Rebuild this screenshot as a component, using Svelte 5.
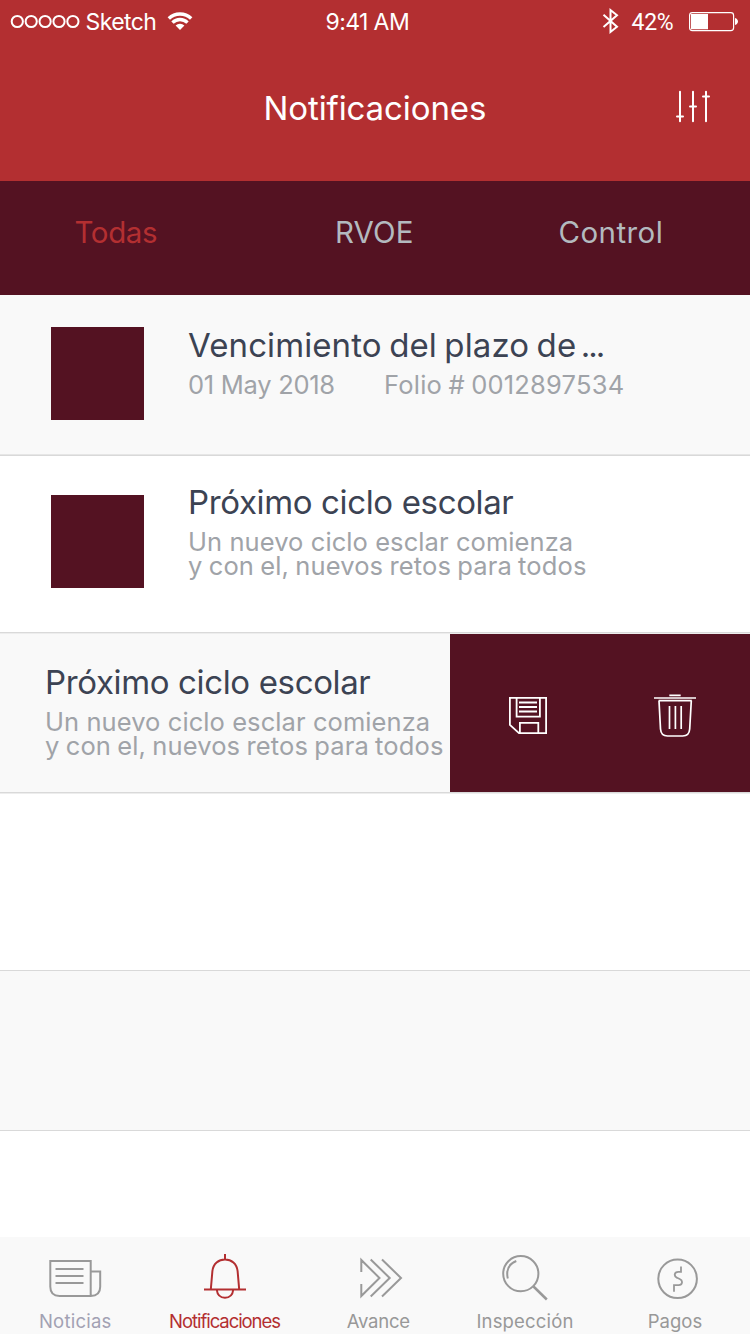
<script>
  const tabs = [
    { label: 'Todas', key: 'all', active: true },
    { label: 'RVOE', key: 'rvoe' },
    { label: 'Control', key: 'control' }
  ];
  const nav = [
    { label: 'Noticias', key: 'news' },
    { label: 'Notificaciones', key: 'alerts' },
    { label: 'Avance', key: 'progress' },
    { label: 'Inspección', key: 'inspect' },
    { label: 'Pagos', key: 'pay' }
  ];
</script>

{#snippet message()}
  <div class="copy">
    <h2 class="tight">Próximo ciclo escolar</h2>
    <p class="line-a">Un nuevo ciclo esclar comienza</p>
    <p class="line-b">y con el, nuevos retos para todos</p>
  </div>
{/snippet}

<div class="screen">
  <header>
    <div class="status">
      <div class="carrier">
        <svg width="70" height="44" viewBox="10 0 70 44" fill="none" stroke="#fff" stroke-width="2">
          {#each [17.3, 31.2, 45.1, 59, 72.9] as x}<circle cx={x} cy="21.5" r="5.6" />{/each}
        </svg>
        <span>Sketch</span>
        <svg width="26" height="44" viewBox="167 0 26 44" fill="none" stroke="#fff" stroke-width="3.4">
          <path d="M168.8 18.5a16 16 0 0 1 22.4 0M172.5 22.6a10.6 10.6 0 0 1 15 0" />
          <path d="M180 30l-4.4-4.4a6.2 6.2 0 0 1 8.8 0z" fill="#fff" stroke="none" />
        </svg>
      </div>
      <span class="time">9:41 AM</span>
      <div class="power">
        <svg width="18" height="44" viewBox="602 0 18 44" fill="none" stroke="#fff" stroke-width="2">
          <path d="M603.5 14.8L617 26.8l-6.5 5.2v-22l6.5 5.2-13.5 11.8" />
        </svg>
        <span>42%</span>
        <svg width="51" height="44" viewBox="688 0 51 44">
          <rect x="689.6" y="12.6" width="44" height="18" rx="2.8" fill="none" stroke="#fff" stroke-width="1.2" />
          <path d="M691 14h17v15.2h-17zM735 18c2 .6 3 2 3 3.5s-1 2.9-3 3.5z" fill="#fff" />
        </svg>
      </div>
    </div>
    <div class="titlebar">
      <h1>Notificaciones</h1>
      <svg width="36" height="40" viewBox="675 88 36 40" fill="none" stroke="#fff" stroke-width="2" stroke-linecap="round">
        <path d="M680 91.8v29.4M693 91.8v29.4M706 91.8v29.4M677 116.5h6M690 106.5h6M703 96.5h6" />
      </svg>
    </div>
  </header>

  <div class="tabs">
    {#each tabs as tab}
      <span class="tab {tab.key}" class:active={tab.active}>{tab.label}</span>
    {/each}
  </div>

  <main>
    <section class="row short shade">
      <div class="thumb"></div>
      <div class="copy">
        <h2>Vencimiento del plazo de <span class="dots">...</span></h2>
        <div class="meta"><span class="date">01 May 2018</span><span class="folio">Folio # 0012897534</span></div>
      </div>
    </section>
    <section class="row tall">
      <div class="thumb"></div>
      {@render message()}
    </section>
    <section class="row short shade swiped">
      {@render message()}
      <div class="actions">
        <svg width="150" height="158" viewBox="450 634 150 158" fill="none" stroke="#fff" stroke-width="1.8">
          <path d="M509.9 697.9H546.1V733.1H519L509.9 724.8zM516.6 698v18.6h23.3V698M519 702.5h18M519 707h18M519 711.5h18M519.9 733v-10.2h18.4V733" />
        </svg>
        <svg width="150" height="158" viewBox="600 634 150 158" fill="none" stroke="#fff" stroke-width="1.7">
          <path d="M654 698h42M669.3 695.4h11.4M658.6 700.6h33.2M659 700.6l1.5 28.4q.5 7 7 7h15.2q6.5 0 7-7l1.6-28.4M669.5 706v23M675.4 706v23M681.2 706v23" />
        </svg>
      </div>
    </section>
    <section class="row tall blank"></section>
    <section class="row short shade last"></section>
  </main>

  <nav>
    {#each nav as item, i}
      <div class="item {item.key}">
        <svg width="150" height="60" viewBox="{i * 150} 1247 150 60" fill="none" stroke="currentColor" stroke-width="2">
          {#if item.key === 'news'}
            <path d="M50.3 1261H90.7V1296H59.5q-9.2 0-9.2-9.2zM90.7 1271.5h9.5v15.3q0 9.2-9.5 9.2M55.5 1269h28M55.5 1276h28M55.5 1283h28" />
          {:else if item.key === 'alerts'}
            <path d="M204 1289.6h42M225 1254v5.5M210.8 1289.5l1.6-18.5c.8-7.5 6.2-11.6 12.6-11.6s11.8 4.1 12.6 11.6l1.6 18.5M216.8 1290c.6 5 3.7 7.7 8.2 7.7s7.6-2.7 8.2-7.7" />
          {:else if item.key === 'progress'}
            <path d="M361.3 1272v-12l18.2 18-18.2 18v-12M370.7 1259.5l19 18.5-19 18.5M382 1259.5l19 18.5-19 18.5" />
          {:else if item.key === 'inspect'}
            <circle cx="520.8" cy="1273.7" r="17.6" /><path d="M507.8 1278.5c-1.8-8 1-14.5 8.5-17.5" />
            <path d="M533.5 1286.5l13.3 13" stroke-width="2.5" />
          {:else}
            <circle cx="677.6" cy="1278.8" r="19.3" />
            <path d="M681 1266.5v5.3h-2.7c-4.2 0-4.7 4.5-1.2 6l2.6 1.2c3.6 1.6 2.8 6.2-1 6.2h-4.7v6.5" stroke-width="1.8" />
          {/if}
        </svg>
        <span>{item.label}</span>
      </div>
    {/each}
  </nav>
</div>

<style>
  :global(body) { margin: 0; background: #fff; }
  .screen { width: 750px; height: 1334px; display: flex; flex-direction: column; overflow: hidden; font-family: Inter, "Liberation Sans", sans-serif; background: #fff; }
  svg { display: block; flex: none; }
  h1, h2, p { margin: 0; font-weight: 400; }
  span, h1, h2, p { white-space: nowrap; }

  header { height: 181px; flex: none; background: #b32f31; color: #fff; }
  .status { height: 44px; display: grid; grid-template-columns: 315.5px 84px 1fr; font-size: 23px; line-height: 44px; padding: 0 11px 0 10px; }
  .carrier, .power { display: flex; }
  .carrier span { margin-left: 5.5px; width: 81.5px; letter-spacing: -.6px; }
  .time { letter-spacing: -.6px; }
  .power { justify-content: flex-end; }
  .power span { width: 56.5px; margin-left: 11.5px; font-family: Roboto, sans-serif; letter-spacing: -.3px; line-height: 46px; height: 44px; }
  .titlebar { display: grid; grid-template-columns: 263.5px 1fr 36px; padding: 44px 39px 0 0; }
  h1 { grid-column: 2; font-size: 33px; line-height: 40px; letter-spacing: -.1px; }

  .tabs { height: 83px; flex: none; padding-top: 31px; background: #541222; display: grid; grid-template-columns: 260.5px 223.5px 1fr; padding-left: 74.5px; color: #b3babf; font-size: 29.5px; line-height: 40px; }
  .all { letter-spacing: -.4px; }
  .rvoe { letter-spacing: .1px; }
  .control { letter-spacing: .42px; }
  .active { color: #b32f31; }

  main { flex: none; }
  .row { display: flex; box-sizing: border-box; border-bottom: 1px solid #ededed; box-shadow: inset 0 -1px #d9d9d9; padding-bottom: 1px; background: #fff; }
  .short { height: 160px; }
  .tall { height: 178px; }
  .shade { background: #f9f9f9; }
  .row:first-child { height: 161px; border-color: #d9d9d9; box-shadow: inset 0 -1px #e6e6e6; }
  .thumb { width: 93px; height: 93px; margin: 32px 44px 0 51px; background: #541222; flex: none; }
  .tall .thumb { margin-top: 39px; }
  .copy { padding-top: 30px; color: #a0a3a8; font-size: 25.5px; line-height: 24px; }
  .tall .copy { padding-top: 26px; }
  h2 { color: #3c4353; font-size: 33px; line-height: 40px; letter-spacing: .1px; word-spacing: -1.9px; margin-bottom: 7.5px; }
  h2 .dots { letter-spacing: -2px; margin-left: -3px; }
  h2.tight { letter-spacing: -.36px; word-spacing: 0; }
  .meta { display: flex; }
  .date { width: 196px; letter-spacing: -.28px; }
  .folio { letter-spacing: .21px; word-spacing: -1px; }
  .line-a { letter-spacing: .08px; }
  .line-b { letter-spacing: .14px; word-spacing: -1.1px; }
  .swiped { justify-content: space-between; }
  .swiped .copy { padding: 28px 0 0 45px; }
  .actions { display: flex; background: #541222; }
  .blank { height: 177px; }
  .row.blank, .row.last { border-color: #d9d9d9; box-shadow: none; }

  nav { margin-top: auto; height: 97px; flex: none; display: grid; grid-template-columns: repeat(5, 150px); background: #f9f9f9; color: #989898; font-size: 18.5px; line-height: 22px; box-sizing: border-box; padding-top: 10px; }
  .item { display: flex; flex-direction: column; align-items: center; gap: 3px; }
  .news span { color: #a2a1b3; letter-spacing: .24px; padding-left: .5px; }
  .alerts { color: #b32f31; }
  .alerts span { letter-spacing: -1.06px; padding-right: 1px; }
  .progress span { letter-spacing: -.22px; padding-left: 6.5px; }
  .inspect span { letter-spacing: .18px; }
  .pay span { letter-spacing: .02px; }
  .news svg, .progress svg, .inspect svg, .pay svg { color: #999; }
</style>
